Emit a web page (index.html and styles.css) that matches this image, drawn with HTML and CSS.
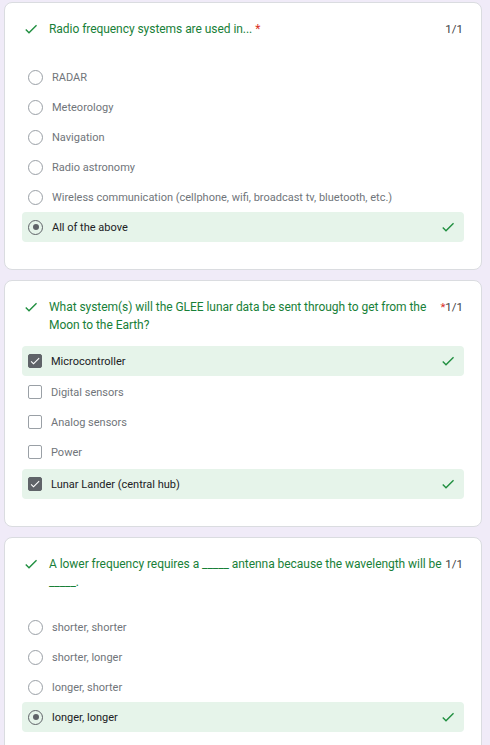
FILE: index.html
```html
<!DOCTYPE html>
<html>
<head>
<meta charset="utf-8">
<link rel="stylesheet" href="styles.css">
</head>
<body>
<div class="page">
  <section class="card">
    <div class="qhead">
      <svg class="qcheck" viewBox="0 0 24 24"><path d="M9 16.17L4.83 12l-1.42 1.41L9 19 21 7l-1.41-1.41z"/></svg>
      <div class="qtitle">Radio frequency systems are used in... <span class="req">*</span></div>
      <div class="points">1/1</div>
    </div>
    <div class="opts radio-group">
      <div class="opt"><span class="radio"></span><span class="label">RADAR</span></div>
      <div class="opt"><span class="radio"></span><span class="label">Meteorology</span></div>
      <div class="opt"><span class="radio"></span><span class="label">Navigation</span></div>
      <div class="opt"><span class="radio"></span><span class="label">Radio astronomy</span></div>
      <div class="opt"><span class="radio"></span><span class="label">Wireless communication (cellphone, wifi, broadcast tv, bluetooth, etc.)</span></div>
      <div class="opt correct"><span class="radio on"></span><span class="label">All of the above</span><svg class="ocheck" viewBox="0 0 24 24"><path d="M9 16.17L4.83 12l-1.42 1.41L9 19 21 7l-1.41-1.41z"/></svg></div>
    </div>
  </section>

  <section class="card">
    <div class="qhead">
      <svg class="qcheck" viewBox="0 0 24 24"><path d="M9 16.17L4.83 12l-1.42 1.41L9 19 21 7l-1.41-1.41z"/></svg>
      <div class="qtitle">What system(s) will the GLEE lunar data be sent through to get from the Moon to the Earth?</div>
      <div class="points"><span class="req">*</span>1/1</div>
    </div>
    <div class="opts check-group">
      <div class="opt correct"><span class="box on"><svg viewBox="0 0 24 24"><path d="M9 16.17L4.83 12l-1.42 1.41L9 19 21 7l-1.41-1.41z"/></svg></span><span class="label">Microcontroller</span><svg class="ocheck" viewBox="0 0 24 24"><path d="M9 16.17L4.83 12l-1.42 1.41L9 19 21 7l-1.41-1.41z"/></svg></div>
      <div class="opt"><span class="box"></span><span class="label">Digital sensors</span></div>
      <div class="opt"><span class="box"></span><span class="label">Analog sensors</span></div>
      <div class="opt"><span class="box"></span><span class="label">Power</span></div>
      <div class="opt correct"><span class="box on"><svg viewBox="0 0 24 24"><path d="M9 16.17L4.83 12l-1.42 1.41L9 19 21 7l-1.41-1.41z"/></svg></span><span class="label">Lunar Lander (central hub)</span><svg class="ocheck" viewBox="0 0 24 24"><path d="M9 16.17L4.83 12l-1.42 1.41L9 19 21 7l-1.41-1.41z"/></svg></div>
    </div>
  </section>

  <section class="card">
    <div class="qhead">
      <svg class="qcheck" viewBox="0 0 24 24"><path d="M9 16.17L4.83 12l-1.42 1.41L9 19 21 7l-1.41-1.41z"/></svg>
      <div class="qtitle">A lower frequency requires a _____ antenna because the wavelength will be _____.</div>
      <div class="points">1/1</div>
    </div>
    <div class="opts radio-group tight">
      <div class="opt"><span class="radio"></span><span class="label">shorter, shorter</span></div>
      <div class="opt"><span class="radio"></span><span class="label">shorter, longer</span></div>
      <div class="opt"><span class="radio"></span><span class="label">longer, shorter</span></div>
      <div class="opt correct"><span class="radio on"></span><span class="label">longer, longer</span><svg class="ocheck" viewBox="0 0 24 24"><path d="M9 16.17L4.83 12l-1.42 1.41L9 19 21 7l-1.41-1.41z"/></svg></div>
    </div>
  </section>
</div>
</body>
</html>
```

FILE: styles.css
```css
html, body {
  margin: 0;
  padding: 0;
  background: #f0ebf8;
  font-family: Roboto, "Liberation Sans", Arial, sans-serif;
}

.page {
  padding: 2px 8px 0 4px;
  display: flex;
  flex-direction: column;
  gap: 10px;
}

.card {
  background: #ffffff;
  border: 1px solid #dadce0;
  border-radius: 8px;
  padding: 17px 17px 27px 17px;
}

.qhead {
  display: flex;
  align-items: flex-start;
  padding-left: 1px;
  padding-right: 1px;
}

.qcheck {
  width: 16px;
  height: 16px;
  fill: #1e8e3e;
  flex: none;
  margin-top: 1px;
  margin-right: 10px;
}

.qtitle {
  flex: 1;
  font-size: 12px;
  line-height: 18px;
  letter-spacing: -0.05px;
  color: #188038;
}

.req {
  color: #d93025;
}

.points {
  flex: none;
  margin-left: 3px;
  font-size: 11.5px;
  line-height: 18px;
  color: #3c4043;
}

.opts {
  display: flex;
  flex-direction: column;
}

.radio-group { margin-top: 24px; }
.radio-group.tight { margin-top: 21px; }
.check-group { margin-top: 12px; }

.check-group .opt:first-child { margin-bottom: 1px; }
.check-group .opt:last-child { margin-top: 2px; }

.opt {
  height: 30px;
  display: flex;
  align-items: center;
  padding: 0 8px 0 6px;
  border-radius: 4px;
}

.opt.correct {
  background: #e6f4ea;
}

.label {
  flex: 1;
  font-size: 11px;
  color: #70757a;
}

.opt.correct .label {
  color: #202124;
}

.radio {
  width: 15px;
  height: 15px;
  box-sizing: border-box;
  border: 1.5px solid #9aa0a6;
  border-radius: 50%;
  margin-right: 9px;
  flex: none;
  display: flex;
  align-items: center;
  justify-content: center;
}

.radio.on {
  border-color: #5f6368;
}

.radio.on::after {
  content: "";
  width: 6px;
  height: 6px;
  border-radius: 50%;
  background: #5f6368;
}

.box {
  width: 14px;
  height: 14px;
  box-sizing: border-box;
  border: 1.5px solid #9aa0a6;
  border-radius: 2px;
  margin-right: 9px;
  flex: none;
  display: flex;
  align-items: center;
  justify-content: center;
}

.box.on {
  background: #5f6368;
  border-color: #5f6368;
}

.box svg {
  width: 12px;
  height: 12px;
  fill: #ffffff;
}

.ocheck {
  width: 16px;
  height: 16px;
  fill: #1e8e3e;
  flex: none;
}
```
